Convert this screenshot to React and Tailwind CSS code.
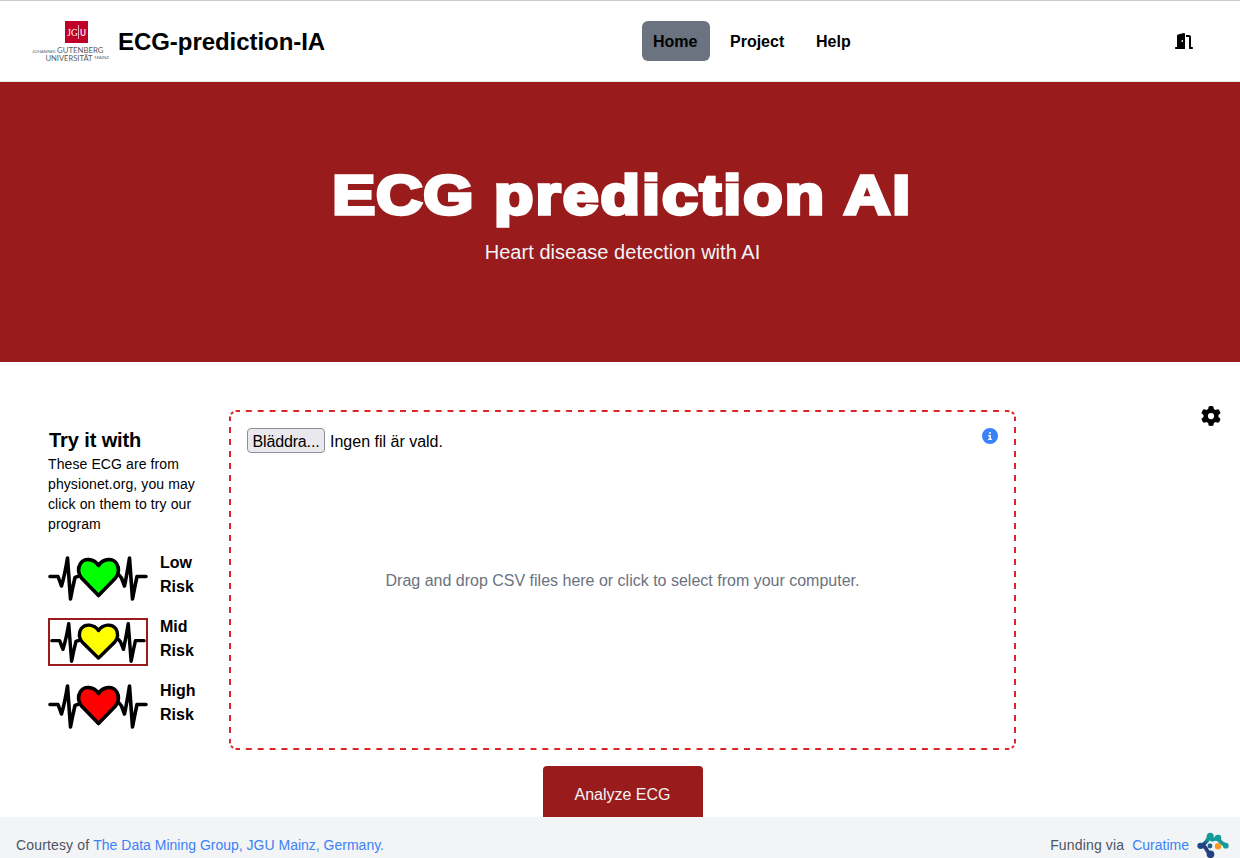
import React from "react";
import { FaDoorOpen, FaCircleInfo, FaGear } from "react-icons/fa6";

function JguLogo() {
  return (
    <svg className="block h-[42px] w-[78px] overflow-visible" viewBox="0 0 78 42" fontFamily="Lato, sans-serif">
      <rect x="33" y="1" width="23" height="22" fill="#c1002a" />
      <text x="35.3" y="16" fontSize="10" fill="#fff" fontFamily="'Liberation Serif', serif" textLength="10.5" lengthAdjust="spacingAndGlyphs">JG</text>
      <rect x="46.2" y="5" width="0.7" height="14" fill="#fff" />
      <text x="48" y="16" fontSize="9" fontWeight="600" fill="#fff" textLength="6" lengthAdjust="spacingAndGlyphs">U</text>
      <g fill="#5c5c5c">
        <text x="0" y="32.6" fontSize="4.4" textLength="23.5" lengthAdjust="spacingAndGlyphs">JOHANNES</text>
        <text x="25" y="32.8" fontSize="7.6" textLength="46.5" lengthAdjust="spacingAndGlyphs">GUTENBERG</text>
        <text x="13.5" y="41" fontSize="7.6" textLength="47" lengthAdjust="spacingAndGlyphs">UNIVERSITÄT</text>
        <text x="62.5" y="38.6" fontSize="4.4" textLength="14.5" lengthAdjust="spacingAndGlyphs">MAINZ</text>
      </g>
    </svg>
  );
}

function CuratimeLogo() {
  return (
    <svg className="block h-8 w-8" viewBox="0 0 32 32">
      <defs>
        <linearGradient id="curatime" x1="0" y1="1" x2="0.5" y2="0">
          <stop offset="0.3" stopColor="#22407f" />
          <stop offset="0.85" stopColor="#139a9a" />
        </linearGradient>
      </defs>
      <path d="M3.500 16.500Q7.500 15.500 9.500 12.500Q11.500 10 12 7.500" fill="none" stroke="url(#curatime)" strokeWidth="4" />
      <path d="M13 7.500Q13.500 11.500 16.500 10.500L20.500 9Q23.500 14 29 16.500" fill="none" stroke="#159b9b" strokeWidth="3.8" />
      <path d="M3.500 17Q8.500 17 9.500 20.500Q10.500 23 13.500 25" fill="none" stroke="#22427f" strokeWidth="3.8" />
      <circle cx="13.2" cy="7.3" r="3.5" fill="#139b9b" />
      <circle cx="21" cy="9" r="3.3" fill="#149c9b" />
      <circle cx="3.4" cy="16.800" r="3.100" fill="#234786" />
      <circle cx="13" cy="17" r="2.400" fill="#1e5d89" />
      <circle cx="13.500" cy="25.300" r="3.800" fill="#1f4280" />
      <circle cx="28.800" cy="16.700" r="2.900" fill="#159d9c" />
      <circle cx="21" cy="17.300" r="3.200" fill="#f59a27" />
    </svg>
  );
}

function HeartTrace({ color, selected }) {
  return (
    <svg
      viewBox="0 0 100 48"
      preserveAspectRatio="none"
      className={selected ? "mt-1 block h-12 w-[100px] shrink-0 border-2 border-[#991b1b]" : "mt-1 block h-12 w-[100px] shrink-0"}
    >
      <g fill="none" stroke="#000" strokeWidth="3.6" strokeLinecap="round" strokeLinejoin="round">
        <path d="M2 22.500H10L13.500 32Q17 20 19.500 4L22.500 45Q24.500 34 27 23.500Q28 22.500 30 22.500" />
        <path d="M71 21Q72.500 22.500 73.500 24L76.500 32Q79 20 81.500 4L84.500 45Q86.500 34 89 22.500H98" />
        <path
          d="M50.500 11.500C46 4.500 36.500 3.500 32.500 9.500C29.500 14 30 20 33.500 24L50.500 41.500L67.500 24C71 20 71.500 14 68.500 9.500C64.500 3.500 55 4.500 50.500 11.500Z"
          fill={color}
        />
      </g>
    </svg>
  );
}

function DashedOutline() {
  return (
    <svg className="pointer-events-none absolute inset-0 h-full w-full" viewBox="0 0 787 340" fill="none" stroke="#dc2626" strokeWidth="2" aria-hidden="true">
      <g strokeDasharray="5.93 5.93" strokeDashoffset="2.96">
        <path d="M8 1H779" />
        <path d="M8 339H779" />
      </g>
      <g strokeDasharray="6 6" strokeDashoffset="3">
        <path d="M1 8V332" />
        <path d="M786 8V332" />
      </g>
      <g strokeDasharray="1.5 2.5 3 2.5 1.5 20">
        <path d="M1 8A7 7 0 0 1 8 1" />
        <path d="M779 1A7 7 0 0 1 786 8" />
        <path d="M786 332A7 7 0 0 1 779 339" />
        <path d="M8 339A7 7 0 0 1 1 332" />
      </g>
    </svg>
  );
}

const samples = [
  { level: "Low", color: "#00ff00" },
  { level: "Mid", color: "#ffff00", selected: true },
  { level: "High", color: "#ff0000" },
];

export default function App() {
  return (
    <div className="flex h-[858px] w-full flex-col overflow-hidden bg-white font-['Liberation_Sans',Arial,sans-serif] text-black">
      <header className="flex h-[82px] shrink-0 items-center border-t border-b border-t-[#c8c8c8] border-b-gray-200 pr-[46px] pl-8">
        <div className="flex w-[610px] items-center gap-2">
          <JguLogo />
          <span className="pt-0.5 text-2xl font-bold tracking-[-0.05px]">ECG-prediction-IA</span>
        </div>
        <nav className="flex gap-2 font-bold">
          <a className="w-[68px] rounded-md bg-[#6b7280] pt-[9px] pb-[7px] pl-[11px]">Home</a>
          <a className="w-[78px] pt-[9px] pb-[7px] pl-3">Project</a>
          <a className="pt-[9px] pb-[7px] pl-3">Help</a>
        </nav>
        <FaDoorOpen className="ml-auto h-4 w-5" />
      </header>

      <section className="flex h-[280px] shrink-0 flex-col items-center bg-[#991b1b] pt-[82px] pl-[5px] text-white">
        <h1 className="scale-x-[1.15] text-[56px] leading-[62px] font-bold tracking-[1.8px] whitespace-nowrap [-webkit-text-stroke:3.5px_white]">
          <span className="tracking-[0.7px]">ECG</span> prediction AI
        </h1>
        <p className="mt-3 text-xl tracking-[0.03px] text-gray-100">Heart disease detection with AI</p>
      </section>

      <main className="flex h-[455px] shrink-0 items-start overflow-hidden pt-12 pr-[19px] pl-12">
        <aside className="w-[181px] pt-4">
          <h2 className="pl-px text-xl leading-7 font-bold tracking-[-0.1px]">Try it with</h2>
          <p className="w-[155px] text-sm leading-5 tracking-[0.1px]">
            These ECG are from physionet.org, you may click on them to try our program
          </p>
          <ul className="mt-4 flex flex-col gap-4">
            {samples.map((s) => (
              <li key={s.level} className="flex h-12 gap-3">
                <HeartTrace color={s.color} selected={s.selected} />
                <span className="w-9 pt-px leading-6 font-bold">{s.level} Risk</span>
              </li>
            ))}
          </ul>
        </aside>

        <div className="flex w-[787px] flex-col items-center">
          <div className="relative flex h-[340px] w-full flex-col p-[18px]">
            <DashedOutline />
            <div className="flex h-[25px] items-start justify-between">
              <div className="flex items-start gap-[5px]">
                <button className="h-[25px] w-[78px] rounded border border-[#8f8f9d] bg-[#e9e9ed] pt-0.5 text-base leading-[21px] tracking-[-0.15px]">Bläddra...</button>
                <span className="pt-0.5 leading-[23px]">Ingen fil är vald.</span>
              </div>
              <FaCircleInfo className="h-4 w-4 text-[#3b82f6]" />
            </div>
            <p className="mt-[116px] text-center text-[#6b7280]">
              Drag and drop CSV files here or click to select from your computer.
            </p>
          </div>
          <button className="mt-4 h-14 w-40 rounded bg-[#991b1b] pt-0.5 text-base text-gray-100">Analyze ECG</button>
        </div>

        <FaGear className="mt-[-4px] ml-auto h-5 w-5" />
      </main>

      <footer className="flex h-14 shrink-0 items-center justify-between bg-[#f3f4f6] pr-[11px] pl-4 text-sm text-[#4b5563]">
        <p>
          <span className="tracking-[0.15px]">Courtesy of </span>
          <a className="text-[#3b82f6]">The Data Mining Group, JGU Mainz, Germany.</a>
        </p>
        <div className="flex items-center gap-2">
          <span className="tracking-[0.15px]">Funding via</span>
          <a className="text-[#3b82f6]">Curatime</a>
          <CuratimeLogo />
        </div>
      </footer>
    </div>
  );
}
